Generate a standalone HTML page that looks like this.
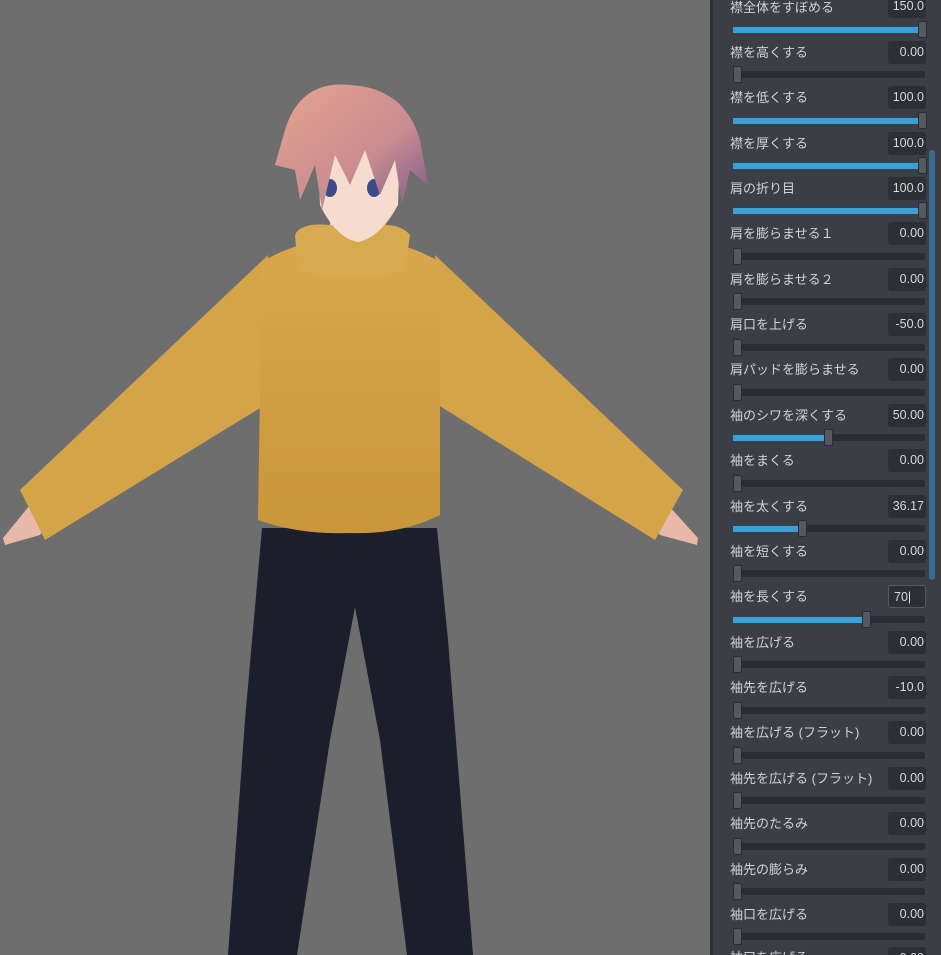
<!DOCTYPE html>
<html style="overflow:hidden;width:941px;height:955px"><head><meta charset="utf-8"><style>
body{margin:0;width:941px;height:955px;overflow:hidden;background:#6e6e6e;position:relative;font-family:"Liberation Sans","Noto Sans CJK JP",sans-serif}
#panel{position:absolute;left:710px;top:0;width:231px;height:955px;overflow:hidden;background:#3b3f45;border-left:3px solid #2c2f33;box-sizing:border-box}
.l{position:absolute;left:17px;font-size:13px;color:#d0d3d6;line-height:16px}
.b{position:absolute;left:175px;width:38px;height:23px;background:#2c2f33;border-radius:3px;color:#d8dadc;font-size:12.5px;line-height:23px;text-align:right;padding-right:2px;box-sizing:border-box}
.t{position:absolute;left:20px;width:192px;height:7px;background:#2a2d31;border-radius:2px}
.f{position:absolute;left:0;top:0;height:6px;background:#3d9fd6;border-top:1px solid #1c4c6a}
.h{position:absolute;width:9px;height:17px;top:-5px;background:#55595e;border:1px solid #2a2d31;border-radius:2px;box-sizing:border-box}
#sb{position:absolute;left:216px;top:150px;width:6px;height:430px;background:#3a6c8c;border-radius:3px}
</style></head><body>
<svg width="710" height="955" style="position:absolute;left:0;top:0">
<defs>
<linearGradient id="hair" x1="0" y1="0" x2="1" y2="1"><stop offset="0" stop-color="#e8a48e"/><stop offset="0.6" stop-color="#c98c90"/><stop offset="1" stop-color="#7a5a8a"/></linearGradient>
<linearGradient id="sw" x1="0" y1="0" x2="0" y2="1"><stop offset="0" stop-color="#d9a84c"/><stop offset="1" stop-color="#c9963a"/></linearGradient>
</defs>
<polygon points="262,528 437,528 448,640 473,955 407,955 380,740 355,607 330,740 297,955 228,955 245,720" fill="#1c1e2b"/>
<polygon points="30,505 50,520 40,535 5,545 3,538" fill="#e8b8a8"/>
<polygon points="668,505 650,520 660,535 697,545 698,538" fill="#e8b8a8"/>
<polygon points="268,255 20,490 45,540 265,405" fill="#d3a448"/>
<polygon points="435,255 683,490 655,540 438,405" fill="#d3a448"/>
<path d="M262,262 Q300,238 350,240 Q400,238 440,262 L440,515 Q400,535 350,533 Q300,535 258,520 Z" fill="url(#sw)"/>
<rect x="330" y="205" width="40" height="40" fill="#f2d2c2"/>
<path d="M295,235 Q300,222 330,225 L370,225 Q400,222 410,235 L405,270 Q350,285 298,270 Z" fill="#d8aa50"/>
<path d="M318,150 L400,150 L398,205 Q380,238 358,242 Q336,238 320,205 Z" fill="#f5dccf"/>
<ellipse cx="330" cy="188" rx="7" ry="9" fill="#3e4a8a"/>
<ellipse cx="374" cy="188" rx="7" ry="9" fill="#3e4a8a"/>
<path d="M285,130 Q300,80 350,85 Q405,88 420,140 L428,185 L410,170 L402,205 L395,160 L380,195 L365,150 L350,185 L335,155 L322,210 L315,165 L300,200 L295,170 L275,165 Z" fill="url(#hair)"/>
</svg>
<div id="panel">
<div class="l" style="top:0px">襟全体をすぼめる</div><div class="b" style="top:-5px">150.0</div><div class="t" style="top:26px"><div class="f" style="width:188px"></div><div class="h" style="left:185px"></div></div>
<div class="l" style="top:45px">襟を高くする</div><div class="b" style="top:41px">0.00</div><div class="t" style="top:71px"><div class="h" style="left:0px"></div></div>
<div class="l" style="top:90px">襟を低くする</div><div class="b" style="top:86px">100.0</div><div class="t" style="top:117px"><div class="f" style="width:188px"></div><div class="h" style="left:185px"></div></div>
<div class="l" style="top:136px">襟を厚くする</div><div class="b" style="top:132px">100.0</div><div class="t" style="top:162px"><div class="f" style="width:188px"></div><div class="h" style="left:185px"></div></div>
<div class="l" style="top:181px">肩の折り目</div><div class="b" style="top:177px">100.0</div><div class="t" style="top:207px"><div class="f" style="width:188px"></div><div class="h" style="left:185px"></div></div>
<div class="l" style="top:226px">肩を膨らませる１</div><div class="b" style="top:222px">0.00</div><div class="t" style="top:253px"><div class="h" style="left:0px"></div></div>
<div class="l" style="top:272px">肩を膨らませる２</div><div class="b" style="top:268px">0.00</div><div class="t" style="top:298px"><div class="h" style="left:0px"></div></div>
<div class="l" style="top:317px">肩口を上げる</div><div class="b" style="top:313px">-50.0</div><div class="t" style="top:344px"><div class="h" style="left:0px"></div></div>
<div class="l" style="top:362px">肩パッドを膨らませる</div><div class="b" style="top:358px">0.00</div><div class="t" style="top:389px"><div class="h" style="left:0px"></div></div>
<div class="l" style="top:408px">袖のシワを深くする</div><div class="b" style="top:404px">50.00</div><div class="t" style="top:434px"><div class="f" style="width:94px"></div><div class="h" style="left:91px"></div></div>
<div class="l" style="top:453px">袖をまくる</div><div class="b" style="top:449px">0.00</div><div class="t" style="top:480px"><div class="h" style="left:0px"></div></div>
<div class="l" style="top:499px">袖を太くする</div><div class="b" style="top:495px">36.17</div><div class="t" style="top:525px"><div class="f" style="width:68px"></div><div class="h" style="left:65px"></div></div>
<div class="l" style="top:544px">袖を短くする</div><div class="b" style="top:540px">0.00</div><div class="t" style="top:570px"><div class="h" style="left:0px"></div></div>
<div class="l" style="top:589px">袖を長くする</div><div class="b" style="top:585px;text-align:left;padding-left:5px;border:1px solid #55595e">70|</div><div class="t" style="top:616px"><div class="f" style="width:132px"></div><div class="h" style="left:129px"></div></div>
<div class="l" style="top:635px">袖を広げる</div><div class="b" style="top:631px">0.00</div><div class="t" style="top:661px"><div class="h" style="left:0px"></div></div>
<div class="l" style="top:680px">袖先を広げる</div><div class="b" style="top:676px">-10.0</div><div class="t" style="top:707px"><div class="h" style="left:0px"></div></div>
<div class="l" style="top:725px">袖を広げる (フラット)</div><div class="b" style="top:721px">0.00</div><div class="t" style="top:752px"><div class="h" style="left:0px"></div></div>
<div class="l" style="top:771px">袖先を広げる (フラット)</div><div class="b" style="top:767px">0.00</div><div class="t" style="top:797px"><div class="h" style="left:0px"></div></div>
<div class="l" style="top:816px">袖先のたるみ</div><div class="b" style="top:812px">0.00</div><div class="t" style="top:843px"><div class="h" style="left:0px"></div></div>
<div class="l" style="top:862px">袖先の膨らみ</div><div class="b" style="top:858px">0.00</div><div class="t" style="top:888px"><div class="h" style="left:0px"></div></div>
<div class="l" style="top:907px">袖口を広げる</div><div class="b" style="top:903px">0.00</div><div class="t" style="top:933px"><div class="h" style="left:0px"></div></div>
<div class="l" style="top:950px">袖口を広げる</div><div class="b" style="top:947px">0.00</div>
<div id="sb"></div>
</div>
</body></html>
